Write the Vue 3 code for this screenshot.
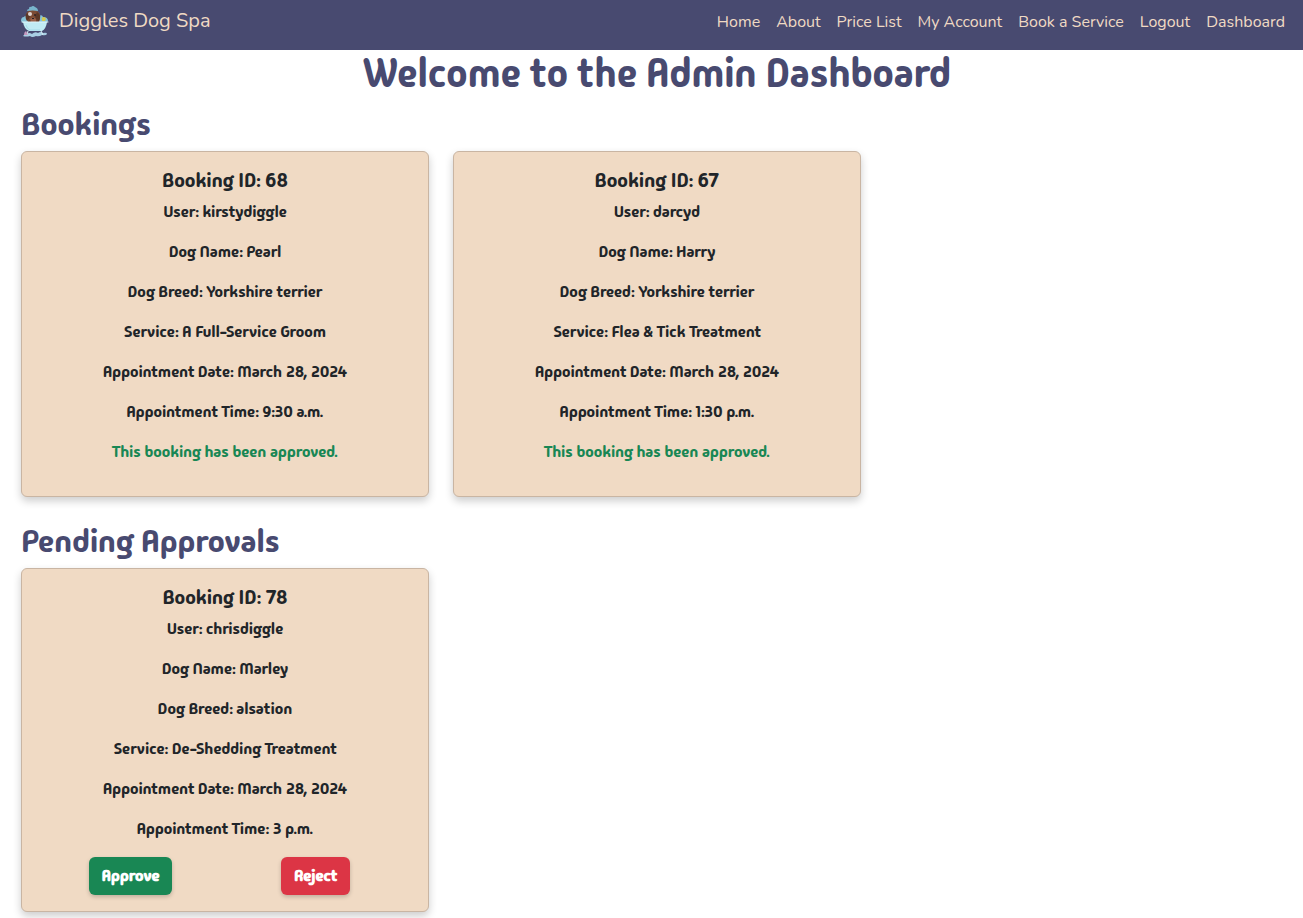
<script setup>
const links = ['Home', 'About', 'Price List', 'My Account', 'Book a Service', 'Logout', 'Dashboard']

const sections = [
  {
    title: 'Bookings',
    bookings: [
      { id: 68, user: 'kirstydiggle', dog: 'Pearl', breed: 'Yorkshire terrier', service: 'A Full-Service Groom', date: 'March 28, 2024', time: '9:30 a.m.', approved: true },
      { id: 67, user: 'darcyd', dog: 'Harry', breed: 'Yorkshire terrier', service: 'Flea & Tick Treatment', date: 'March 28, 2024', time: '1:30 p.m.', approved: true },
    ],
  },
  {
    title: 'Pending Approvals',
    bookings: [
      { id: 78, user: 'chrisdiggle', dog: 'Marley', breed: 'alsation', service: 'De-Shedding Treatment', date: 'March 28, 2024', time: '3 p.m.', approved: false },
    ],
  },
]
</script>

<template>
  <header class="navbar">
    <a href="#" class="brand">
      <svg class="logo" viewBox="0 0 30 32" aria-hidden="true">
        <path d="M3 30q1-2 4-2 2-2 5 0 3-3 6-1 3-2 5 0 4-1 4 1-1 2-5 1-3 2-6 1-4 2-6 0-4 1-7 0z" fill="#a9cfe3" />
        <path d="M8 25l-1 4M21 25l2 4" stroke="#d8eff5" />
        <path d="M4 29q0-3 2-4l2 4z" fill="#c69ac0" />
        <path d="M1 15q0-4 3-4 1-2 4-1h11q3-2 4 1 5 0 5 4l-2 2H3z" fill="#86c2d8" />
        <path d="M6 12q-1-7 5-8 4-1 6 1 4 2 3 8l-1 3H8z" fill="#7c4b34" />
        <path d="M7 7q-3 3 0 8 2-1 3-5zM17 6q5 3 2 9-3 0-4-5z" fill="#5b3727" />
        <path d="M7 5q0-2 2-2 0-3 2-2 2-2 4 0 3 1 3 4-5-1-11 0z" fill="#79b5cd" />
        <circle cx="10" cy="8" r="2" fill="#ddd2cf" />
        <circle cx="15" cy="9" r="1" fill="#2b2226" />
        <path d="M10 13q3-3 6 0v3h-6z" fill="#986049" />
        <path d="M12 12h2v1h-2z" fill="#251f26" />
        <path d="M8 16l2-3 1 3M16 16l1-3 2 3" fill="#68402e" />
        <path d="M22 14q-1-3 2-3 3 1 1 4h-3z" fill="#d7c84c" />
        <path d="M3 16h24q-1 7-5 9H9Q4 23 3 16z" fill="#c0ebf4" />
        <path d="M2 16h26" stroke="#dff5fa" stroke-linecap="round" />
        <path d="M6 19q1 4 4 5h10" fill="none" stroke="#a5dbe8" />
      </svg>
      <span>Diggles Dog Spa</span>
    </a>
    <nav class="links" aria-label="Main">
      <a v-for="link in links" :key="link" href="#">{{ link }}</a>
    </nav>
  </header>

  <main class="dashboard">
    <h1>Welcome to the Admin Dashboard</h1>
    <section v-for="section in sections" :key="section.title" class="section">
      <h2>{{ section.title }}</h2>
      <div class="cards">
        <article v-for="b in section.bookings" :key="b.id" class="card">
          <h3>Booking ID: {{ b.id }}</h3>
          <p>User: {{ b.user }}</p>
          <p>Dog Name: {{ b.dog }}</p>
          <p>Dog Breed: {{ b.breed }}</p>
          <p>Service: {{ b.service }}</p>
          <p>Appointment Date: {{ b.date }}</p>
          <p>Appointment Time: {{ b.time }}</p>
          <p v-if="b.approved" class="approved">This booking has been approved.</p>
          <div v-else class="actions">
            <button type="button" class="btn approve">Approve</button>
            <button type="button" class="btn reject">Reject</button>
          </div>
        </article>
      </div>
    </section>
  </main>
</template>

<style>
body {
  margin: 0;
  background: #fff;
}
</style>

<style scoped>
.navbar,
.dashboard {
  box-sizing: border-box;
}
.navbar {
  display: flex;
  justify-content: space-between;
  min-height: 50px;
  padding: 6px 18px 8px 20px;
  background: #484a70;
  font-family: Nunito, "Noto Sans", sans-serif;
}
.navbar a {
  color: #f0dac4;
  text-decoration: none;
  white-space: nowrap;
}
.brand {
  display: flex;
  gap: 9px;
  font-size: 20px;
  line-height: 30px;
}
.logo {
  width: 30px;
  height: 32px;
}
.links {
  display: flex;
  gap: 16px;
  font-size: 16px;
  line-height: 32px;
}
.dashboard {
  padding: 0 10px 6px 21px;
  font-family: "Madimi One", Roboto, sans-serif;
  font-weight: 500;
  color: #212529;
}
h1,
h2,
h3,
p {
  margin: 0;
}
h1,
h2 {
  margin-bottom: 8px;
  color: #484a70;
  font-weight: 500;
}
h1 {
  font-size: 40px;
  line-height: 47px;
  text-align: center;
}
h2 {
  font-size: 32px;
  line-height: 38px;
}
.section + .section {
  margin-top: 25px;
}
.cards {
  display: grid;
  grid-template-columns: repeat(3, minmax(0, 1fr));
  gap: 24px;
}
.card {
  padding: 16px;
  background: #f0dac4;
  border: 1px solid #c9b5a3;
  border-radius: 6px;
  box-shadow: 0 4px 8px rgba(0, 0, 0, 0.2);
  text-align: center;
}
h3 {
  margin-bottom: 8px;
  font-size: 20px;
  line-height: 24px;
  font-weight: 500;
}
p {
  margin-bottom: 16px;
  font-size: 16px;
  line-height: 24px;
}
.approved {
  color: #198754;
}
.actions {
  display: grid;
  grid-template-columns: 1fr 1fr;
  justify-items: center;
  padding-right: 4px;
}
.btn {
  padding: 7px 13px;
  border: 0;
  border-radius: 6px;
  box-shadow: 0 2px 4px rgba(0, 0, 0, 0.2);
  color: #fff;
  font-family: inherit;
  font-size: 16px;
  font-weight: 700;
  line-height: 24px;
  cursor: pointer;
}
.approve {
  background: #198754;
}
.reject {
  background: #dc3545;
}
</style>
